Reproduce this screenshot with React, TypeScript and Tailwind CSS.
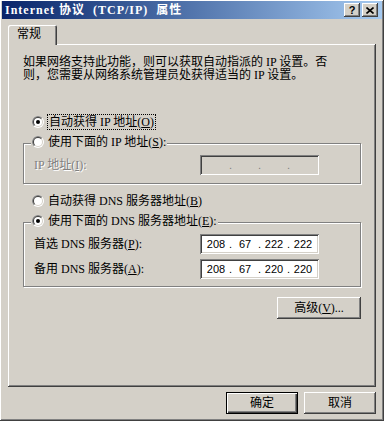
import React from 'react';

const face = "font-['Liberation_Serif','Noto_Sans_CJK_SC',serif]";
const raised =
  'shadow-[inset_-1px_-1px_0_#404040,inset_1px_1px_0_#ffffff,inset_-2px_-2px_0_#808080,inset_2px_2px_0_#d4d0c8]';
const sunken =
  'shadow-[inset_1px_1px_0_#808080,inset_-1px_-1px_0_#ffffff,inset_2px_2px_0_#404040,inset_-2px_-2px_0_#d4d0c8]';

function Radio({ checked }: { checked?: boolean }) {
  return (
    <svg width="12" height="12" viewBox="0 0 12 12" className="shrink-0">
      <circle cx="6" cy="6" r="6" fill="#ffffff" />
      <path d="M1.757 10.243A6 6 0 0 1 10.243 1.757Z" fill="#808080" />
      <circle cx="6" cy="6" r="5" fill="#d4d0c8" />
      <path d="M2.464 9.536A5 5 0 0 1 9.536 2.464Z" fill="#404040" />
      <circle cx="6" cy="6" r="4" fill="#ffffff" />
      {checked && <circle cx="6" cy="6" r="2" fill="#000000" />}
    </svg>
  );
}

function IpBox({ parts, disabled }: { parts: string[]; disabled?: boolean }) {
  return (
    <div
      className={`flex h-[20px] w-[119px] items-center pl-[5px] font-['Liberation_Sans',sans-serif] text-[11px] ${sunken} ${
        disabled ? 'bg-[#d4d0c8] text-[#808080]' : 'bg-white text-black'
      }`}
    >
      {parts.map((p, i) => (
        <React.Fragment key={i}>
          {i > 0 && <span className="w-[7px] text-center">.</span>}
          <span className="w-[22px] text-center">{p}</span>
        </React.Fragment>
      ))}
    </div>
  );
}

function Group({ legend, children, className = '' }: { legend: React.ReactNode; children: React.ReactNode; className?: string }) {
  return (
    <div className={`border border-[#808080] shadow-[inset_1px_1px_0_#ffffff,1px_1px_0_#ffffff] ${className}`}>
      <div className="-mt-[10px] ml-[7px] flex h-[16px] w-fit items-center gap-[4px] bg-[#d4d0c8] px-[1px]">
        {legend}
      </div>
      {children}
    </div>
  );
}

function Button({ children, isDefault, className = '' }: { children: React.ReactNode; isDefault?: boolean; className?: string }) {
  return (
    <div
      className={`flex h-[22px] items-center justify-center bg-[#d4d0c8] ${
        isDefault
          ? 'border border-black shadow-[inset_1px_1px_0_#ffffff,inset_-1px_-1px_0_#404040,inset_-2px_-2px_0_#808080]'
          : raised
      } ${className}`}
    >
      {children}
    </div>
  );
}

export default function App() {
  return (
    <div className={`flex h-[421px] w-[384px] flex-col bg-[#d4d0c8] px-[2px] pt-[1px] text-[12px] text-black ${face} ${raised}`}>
      {/* Title bar */}
      <div className="flex h-[18px] shrink-0 items-center bg-linear-to-r from-[#0a246a] to-[#a6caf0] pl-[3px] pr-[4px]">
        <span className="text-[12px] font-bold leading-none tracking-[1px] text-white whitespace-pre">
          Internet 协议  (TCP/IP)  属性
        </span>
        <div className="ml-auto flex gap-[2px]">
          <div className={`flex h-[14px] w-[16px] items-center justify-center bg-[#d4d0c8] ${raised}`}>
            <span className="font-['Liberation_Sans',sans-serif] text-[11px] font-bold leading-none">?</span>
          </div>
          <div className={`flex h-[14px] w-[16px] items-center justify-center bg-[#d4d0c8] ${raised}`}>
            <svg width="8" height="7" viewBox="0 0 8 7">
              <path d="M0.5 0.5L7.5 6.5M7.5 0.5L0.5 6.5" stroke="#000000" strokeWidth="1.6" />
            </svg>
          </div>
        </div>
      </div>

      <div className="ml-[6px] mt-[6px] flex w-[368px] flex-col">
        {/* Tab */}
        <div className="relative z-10 -mb-px flex h-[20px] w-[49px] items-center rounded-t-[2px] bg-[#d4d0c8] pl-[9px] pb-[2px] shadow-[inset_1px_1px_0_#ffffff,inset_-1px_0_0_#404040,inset_-2px_0_0_#808080]">
          常规
        </div>

        {/* Tab panel */}
        <div className={`flex h-[343px] flex-col px-[15px] pt-[12px] ${raised}`}>
          <p className="leading-[13px]">
            如果网络支持此功能，则可以获取自动指派的 IP 设置。否
            <br />
            则，您需要从网络系统管理员处获得适当的 IP 设置。
          </p>

          <div className="ml-[9px] mt-[31px] flex h-[17px] items-center gap-[3px]">
            <Radio checked />
            <span className="border border-dotted border-black px-[1px] leading-[14px]">
              自动获得 IP 地址(<u>O</u>)
            </span>
          </div>

          <Group
            className="mt-[13px] pb-[8px]"
            legend={
              <>
                <Radio />
                <span>
                  使用下面的 IP 地址(<u>S</u>):
                </span>
              </>
            }
          >
            <div className="mt-[5px] flex items-center pl-[10px]">
              <span className="w-[166px] text-[#808080] [text-shadow:1px_1px_0_#ffffff]">
                IP 地址(<u>I</u>):
              </span>
              <IpBox parts={['', '', '', '']} disabled />
            </div>
          </Group>

          <div className="ml-[9px] mt-[8px] flex h-[17px] items-center gap-[4px]">
            <Radio />
            <span>
              自动获得 DNS 服务器地址(<u>B</u>)
            </span>
          </div>

          <Group
            className="mt-[13px] pb-[7px]"
            legend={
              <>
                <Radio checked />
                <span>
                  使用下面的 DNS 服务器地址(<u>E</u>):
                </span>
              </>
            }
          >
            <div className="mt-[5px] flex items-center pl-[10px]">
              <span className="w-[166px]">
                首选 DNS 服务器(<u>P</u>):
              </span>
              <IpBox parts={['208', '67', '222', '222']} />
            </div>
            <div className="mt-[5px] flex items-center pl-[10px]">
              <span className="w-[166px]">
                备用 DNS 服务器(<u>A</u>):
              </span>
              <IpBox parts={['208', '67', '220', '220']} />
            </div>
          </Group>

          <div className="mt-[10px] flex justify-end">
            <Button className="w-[84px]">
              高级(<u>V</u>)...
            </Button>
          </div>
        </div>

        {/* Dialog buttons */}
        <div className="mt-[5px] flex justify-end gap-[6px]">
          <Button isDefault className="w-[72px]">
            确定
          </Button>
          <Button className="w-[72px]">取消</Button>
        </div>
      </div>
    </div>
  );
}
